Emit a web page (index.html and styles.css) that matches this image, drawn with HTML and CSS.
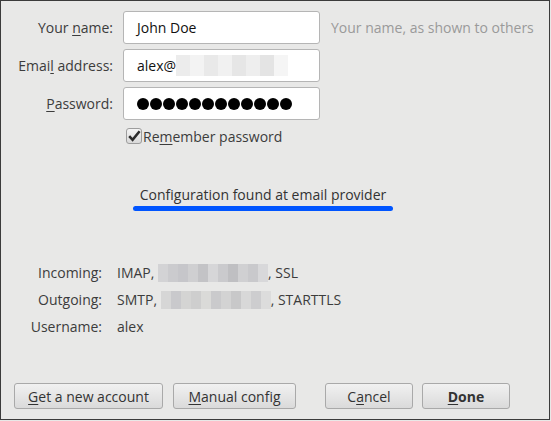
FILE: index.html
```html
<!DOCTYPE html>
<html lang="en">
<head>
<meta charset="utf-8">
<title>Mail Account Setup</title>
<link rel="stylesheet" href="styles.css">
</head>
<body>
<div class="window">
  <div class="form">
    <label class="label" for="name">Your <u>n</u>ame:</label>
    <div class="field"><span class="value">John Doe</span></div>
    <div class="hint">Your name, as shown to others</div>

    <label class="label" for="email">Emai<u>l</u> address:</label>
    <div class="field"><span class="value">alex@</span><span class="redact redact-light"></span></div>
    <div></div>

    <label class="label" for="pass"><u>P</u>assword:</label>
    <div class="field dots">
      <i></i><i></i><i></i><i></i><i></i><i></i><i></i><i></i><i></i><i></i><i></i><i></i>
    </div>
    <div></div>
  </div>

  <div class="remember">
    <span class="checkbox">
      <svg width="16" height="16" viewBox="0 0 16 16"><path d="M3.2 8.2 L6.6 11.8 L13.6 3.2" fill="none" stroke="#2b2b2b" stroke-width="2.6" stroke-linejoin="miter"/></svg>
    </span>
    <span>Re<u>m</u>ember password</span>
  </div>

  <div class="status">
    <div class="status-text">Configuration found at email provider</div>
    <div class="status-bar"></div>
  </div>

  <div class="config">
    <div class="clabel">Incoming:</div>
    <div class="cvalue">IMAP, <span class="redact redact-dark"></span>, SSL</div>
    <div class="clabel">Outgoing:</div>
    <div class="cvalue">SMTP, <span class="redact redact-mid"></span>, STARTTLS</div>
    <div class="clabel">Username:</div>
    <div class="cvalue">alex</div>
  </div>

  <div class="buttons">
    <button class="btn btn-new"><u>G</u>et a new account</button>
    <button class="btn btn-manual"><u>M</u>anual config</button>
    <span class="spacer"></span>
    <button class="btn btn-cancel">C<u>a</u>ncel</button>
    <button class="btn btn-done"><u>D</u>one</button>
  </div>
</div>
</body>
</html>
```

FILE: styles.css
```css
html, body {
  margin: 0;
  padding: 0;
  background: #e8e8e7;
}

body {
  font-family: "Open Sans", "DejaVu Sans", sans-serif;
  font-size: 14px;
  color: #3c3c3c;
}

u {
  text-decoration: underline;
  text-underline-offset: 2px;
}

.window {
  box-sizing: border-box;
  width: 550px;
  height: 420px;
  border: 1px solid #3b3b3b;
  background: #e8e8e7;
  display: flex;
  flex-direction: column;
}

/* account fields */
.form {
  display: grid;
  grid-template-columns: 112px 197px auto;
  grid-auto-rows: 33px;
  column-gap: 10px;
  row-gap: 5px;
  padding-top: 10px;
  align-items: center;
}

.label {
  text-align: right;
  white-space: nowrap;
}

.field {
  box-sizing: border-box;
  height: 33px;
  background: #fff;
  border: 1px solid #b5b5b5;
  border-radius: 3px;
  display: flex;
  align-items: center;
  padding-left: 13px;
  color: #111;
  overflow: hidden;
}

.hint {
  color: #9a9a9a;
  margin-left: 1px;
  white-space: nowrap;
}

.dots {
  gap: 1px;
}

.dots i {
  display: block;
  width: 12px;
  height: 12px;
  border-radius: 50%;
  background: #000;
}

/* pixelated redaction blocks */
.redact {
  display: inline-block;
  height: 21px;
  vertical-align: middle;
}

.redact-light {
  width: 112px;
  background: linear-gradient(90deg,
    #ececec 0 14px, #f3f3f3 14px 28px, #e9e9e9 28px 42px, #f1f1f1 42px 56px,
    #e6e6e6 56px 70px, #eeeeee 70px 84px, #e4e4e4 84px 98px, #f5f5f5 98px 112px);
}

.redact-dark {
  width: 110px;
  height: 18px;
  background: linear-gradient(90deg,
    #d3d3d5 0 10px, #cbcbce 10px 20px, #c6c6ca 20px 30px, #cfcfd1 30px 40px,
    #c3c3c6 40px 50px, #d6d6d8 50px 60px, #cacacd 60px 70px, #bfbfc2 70px 80px,
    #d0d0d2 80px 90px, #c9c9cc 90px 100px, #d8d8da 100px 110px);
  margin-top: -2px;
}

.redact-mid {
  width: 110px;
  height: 18px;
  background: linear-gradient(90deg,
    #d6d6d6 0 10px, #c9c9cc 10px 20px, #d4d4d3 20px 30px, #cecece 30px 40px,
    #dadad8 40px 50px, #cacacc 50px 60px, #d3d3d3 60px 70px, #c8c8c9 70px 80px,
    #d8d8d8 80px 90px, #cdcdcf 90px 100px, #dcdcdc 100px 110px);
  margin-top: -2px;
}

/* remember password */
.remember {
  display: flex;
  align-items: center;
  gap: 1px;
  margin-top: 8px;
  padding-left: 125px;
  height: 16px;
}

.checkbox {
  box-sizing: border-box;
  width: 16px;
  height: 16px;
  border: 1px solid #9d9d9d;
  border-radius: 3px;
  background: linear-gradient(#f4f4f4, #d9d9d9);
  display: flex;
}

.checkbox svg {
  margin: -1px;
}

/* status message */
.status {
  margin-top: 41px;
  margin-left: 132px;
  width: 260px;
  display: flex;
  flex-direction: column;
  align-items: center;
}

.status-text {
  line-height: 20px;
  color: #333;
}

.status-bar {
  margin-top: 1px;
  width: 260px;
  height: 5px;
  border-radius: 3px;
  background: #0055ff;
}

/* server settings */
.config {
  display: grid;
  grid-template-columns: 101px auto;
  column-gap: 15px;
  grid-auto-rows: 27px;
  align-items: center;
  margin-top: 48px;
}

.clabel {
  text-align: right;
}

.cvalue {
  white-space: nowrap;
}

/* dialog buttons */
.buttons {
  margin-top: auto;
  display: flex;
  align-items: center;
  padding: 0 39px 10px 13px;
}

.btn {
  box-sizing: border-box;
  height: 26px;
  font-family: inherit;
  font-size: 14px;
  color: #333;
  background: linear-gradient(#f1f1f1, #dadada);
  border: 1px solid #a9a9a9;
  border-radius: 3px;
  padding: 0;
}

.btn-new { width: 149px; }
.btn-manual { width: 123px; margin-left: 10px; }
.spacer { flex: 1; }
.btn-cancel { width: 88px; }
.btn-done { width: 88px; margin-left: 9px; font-weight: bold; }
```
